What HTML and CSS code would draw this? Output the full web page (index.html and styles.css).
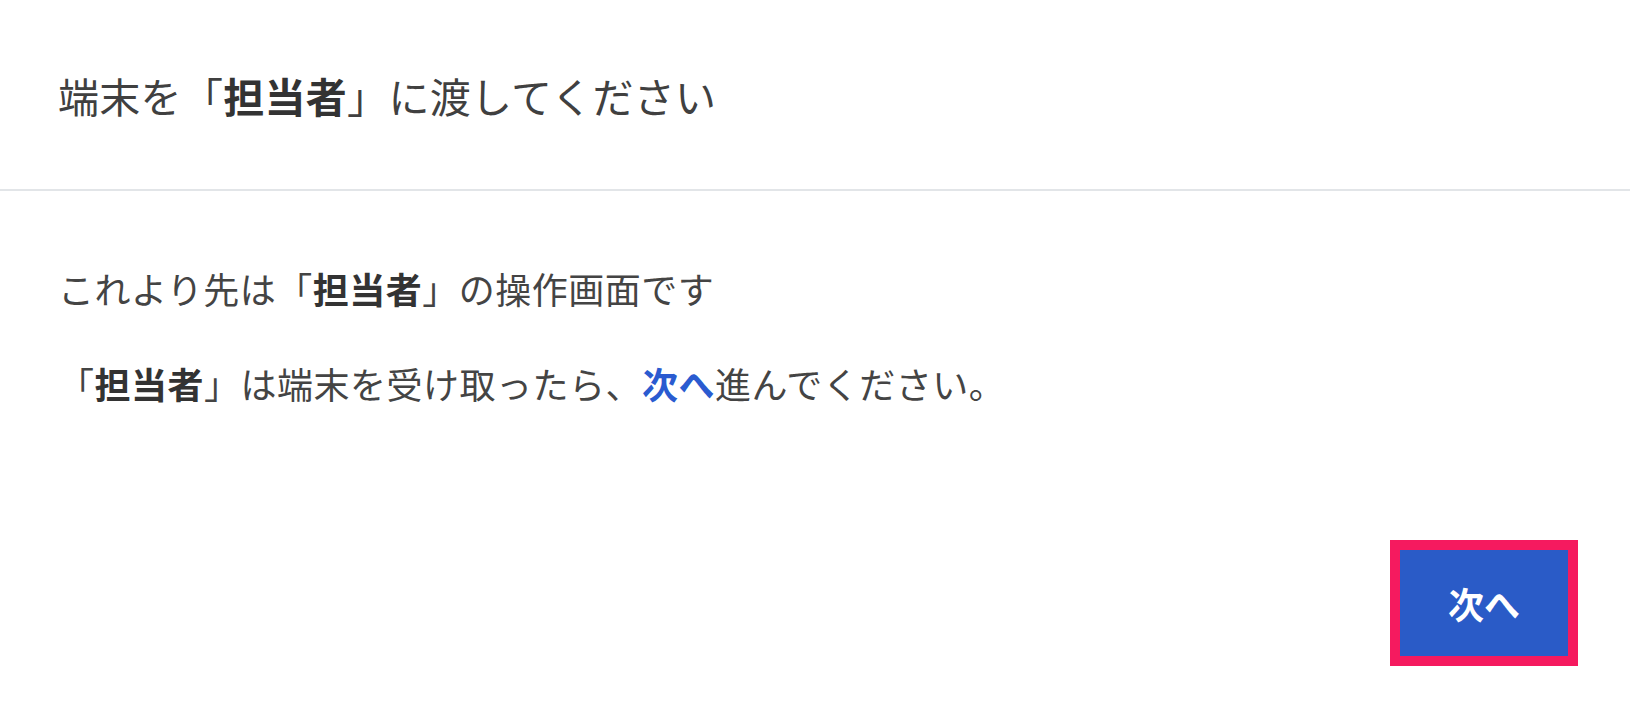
FILE: index.html
```html
<!DOCTYPE html>
<html lang="ja">
<head>
<meta charset="utf-8">
<title>端末を「担当者」に渡してください</title>
<link rel="stylesheet" href="styles.css">
</head>
<body>
<div class="page">
  <header class="header">
    <h1 class="title">端末を「<b>担当者</b>」に渡してください</h1>
  </header>
  <main class="content">
    <p class="line">これより先は「<b>担当者</b>」の操作画面です</p>
    <p class="line line-2">「<b>担当者</b>」は端末を受け取ったら、<b class="link">次へ</b>進んでください。</p>
  </main>
  <footer class="footer">
    <div class="highlight">
      <button class="next-btn" type="button">次へ</button>
    </div>
  </footer>
</div>
</body>
</html>
```
FILE: styles.css
```css
html, body {
  margin: 0;
  padding: 0;
  background: #ffffff;
}
body {
  font-family: "Noto Sans CJK JP", "Noto Sans", sans-serif;
  color: #333333;
}
.page {
  width: 1630px;
  height: 726px;
  display: flex;
  flex-direction: column;
}
.header {
  height: 189px;
  display: flex;
  align-items: center;
  padding-left: 58px;
  border-bottom: 2px solid #e2e5e8;
  box-sizing: content-box;
}
.title {
  margin: 0;
  font-size: 41px;
  font-weight: 400;
  line-height: 48px;
  letter-spacing: 0.3px;
  color: #404040;
}
.title b, .line b {
  font-weight: 700;
  color: #333333;
}
.content {
  padding: 73px 0 0 58px;
}
.line {
  margin: 0;
  font-size: 36px;
  line-height: 48px;
  letter-spacing: 0.5px;
  color: #444444;
}
.line-2 {
  margin-top: 47px;
}
.line b.link {
  color: #2a5bd0;
}
.footer {
  display: flex;
  justify-content: flex-end;
  padding: 133px 52px 0 0;
}
.highlight {
  border: 10px solid #f51a5f;
  display: flex;
}
.next-btn {
  width: 168px;
  height: 106px;
  border: none;
  margin: 0;
  padding: 0;
  background: #2a5bc7;
  color: #ffffff;
  font-family: "Noto Sans CJK JP", "Noto Sans", sans-serif;
  font-size: 36px;
  font-weight: 700;
  cursor: pointer;
}
```
